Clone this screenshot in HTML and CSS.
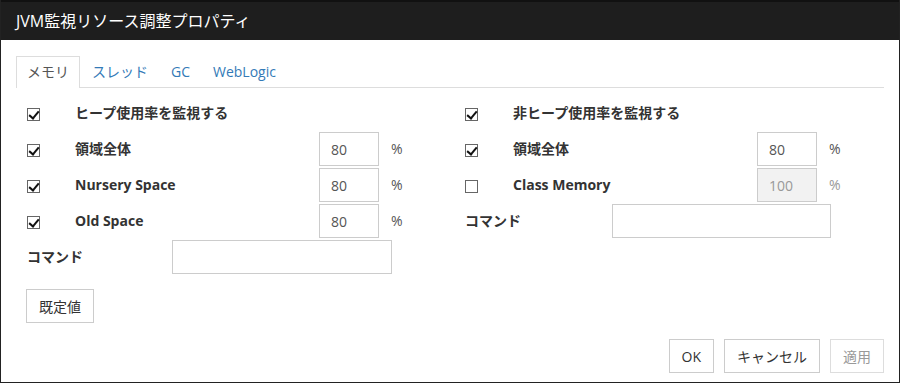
FILE: index.html
```html
<!DOCTYPE html>
<html lang="ja">
  <head>
    <meta charset="UTF-8">
    <meta name="viewport" content="width=device-width, initial-scale=1.0">
    <title>JVM監視リソース調整プロパティ</title>
    <link rel="stylesheet" href="styles.css">
  </head>
  <body>
    <div class="dialog">
      <div class="dialog-header">JVM監視リソース調整プロパティ</div>
      <div class="dialog-body">
        <ul class="tabs">
          <li class="tab active">メモリ</li>
          <li class="tab">スレッド</li>
          <li class="tab">GC</li>
          <li class="tab">WebLogic</li>
        </ul>

        <div class="columns">
          <!-- heap -->
          <div class="column">
            <div class="row">
              <span class="check checked"></span>
              <span class="label">ヒープ使用率を監視する</span>
            </div>
            <div class="row">
              <span class="check checked"></span>
              <span class="label">領域全体</span>
              <input class="num" type="text" value="80" />
              <span class="unit">%</span>
            </div>
            <div class="row">
              <span class="check checked"></span>
              <span class="label">Nursery Space</span>
              <input class="num" type="text" value="80" />
              <span class="unit">%</span>
            </div>
            <div class="row">
              <span class="check checked"></span>
              <span class="label">Old Space</span>
              <input class="num" type="text" value="80" />
              <span class="unit">%</span>
            </div>
            <div class="row">
              <span class="cmd-label">コマンド</span>
              <input class="cmd" type="text" />
            </div>
            <button class="button default-btn">既定値</button>
          </div>

          <!-- non heap -->
          <div class="column right">
            <div class="row">
              <span class="check checked"></span>
              <span class="label">非ヒープ使用率を監視する</span>
            </div>
            <div class="row">
              <span class="check checked"></span>
              <span class="label">領域全体</span>
              <input class="num" type="text" value="80" />
              <span class="unit">%</span>
            </div>
            <div class="row">
              <span class="check"></span>
              <span class="label">Class Memory</span>
              <input class="num" type="text" value="100" disabled />
              <span class="unit disabled">%</span>
            </div>
            <div class="row">
              <span class="cmd-label">コマンド</span>
              <input class="cmd" type="text" />
            </div>
          </div>
        </div>

        <div class="footer">
          <button class="button">OK</button>
          <button class="button">キャンセル</button>
          <button class="button" disabled>適用</button>
        </div>
      </div>
    </div>
  </body>
</html>
```

FILE: styles.css
```css
* {
  box-sizing: border-box;
}
body {
  margin: 0;
  font-family: "Open Sans", "Noto Sans CJK JP", sans-serif;
  font-size: 14px;
  color: #333;
}
.dialog {
  width: 900px;
  height: 383px;
  border: 1px solid #222;
  border-top: 0;
  background: #fff;
}
.dialog-header {
  height: 40px;
  background: #1e1e1e;
  border-top: 2px solid #111;
  color: #fff;
  font-size: 16px;
  line-height: 38px;
  padding-left: 15px;
}
.dialog-body {
  padding: 16px 15px 0 15px;
}

/* tabs */
.tabs {
  list-style: none;
  margin: 0;
  padding: 0;
  display: flex;
  border-bottom: 1px solid #ddd;
  height: 32px;
}
.tab {
  color: #337ab7;
  padding: 0 10px;
  line-height: 30px;
  border: 1px solid transparent;
  border-bottom: 0;
  margin-right: 1px;
}
.tab.active {
  color: #555;
  border-color: #ddd;
  background: #fff;
  height: 32px;
}

/* form */
.columns {
  display: flex;
  margin-top: 8px;
}
.column {
  width: 434px;
  padding-left: 11px;
}
.column.right {
  padding-left: 15px;
}
.row {
  display: flex;
  align-items: flex-start;
  height: 36px;
}
.check {
  width: 13px;
  height: 13px;
  margin-top: 12px;
  border: 1px solid #666;
  margin-right: 35px;
  position: relative;
}
.check.checked::after {
  content: "";
  position: absolute;
  left: 3px;
  top: 0px;
  width: 4px;
  height: 8px;
  border: solid #111;
  border-width: 0 2px 2px 0;
  transform: rotate(40deg);
}
.label {
  font-weight: bold;
  width: 244px;
  line-height: 34px;
}
.num {
  width: 60px;
  height: 34px;
  border: 1px solid #ccc;
  font: inherit;
  color: #555;
  padding: 0 11px;
  margin-right: 12px;
}
.num:disabled {
  background: #f2f2f2;
  color: #999;
}
.unit {
  color: #555;
  line-height: 34px;
}
.unit.disabled {
  color: #999;
}
.cmd-label {
  font-weight: bold;
  width: 145px;
  line-height: 34px;
}
.cmd {
  width: 220px;
  height: 34px;
  border: 1px solid #ccc;
}
.right .cmd-label {
  width: 147px;
}
.right .cmd {
  width: 219px;
}
.button {
  font: inherit;
  color: #333;
  background: #fff;
  border: 1px solid #ccc;
  height: 34px;
  padding: 0 12px;
}
.button:disabled {
  color: #999;
  border-color: #ddd;
}
.default-btn {
  margin-top: 13px;
  margin-left: -1px;
}
.footer {
  display: flex;
  justify-content: flex-end;
  gap: 10px;
  margin-top: 16px;
}
```
